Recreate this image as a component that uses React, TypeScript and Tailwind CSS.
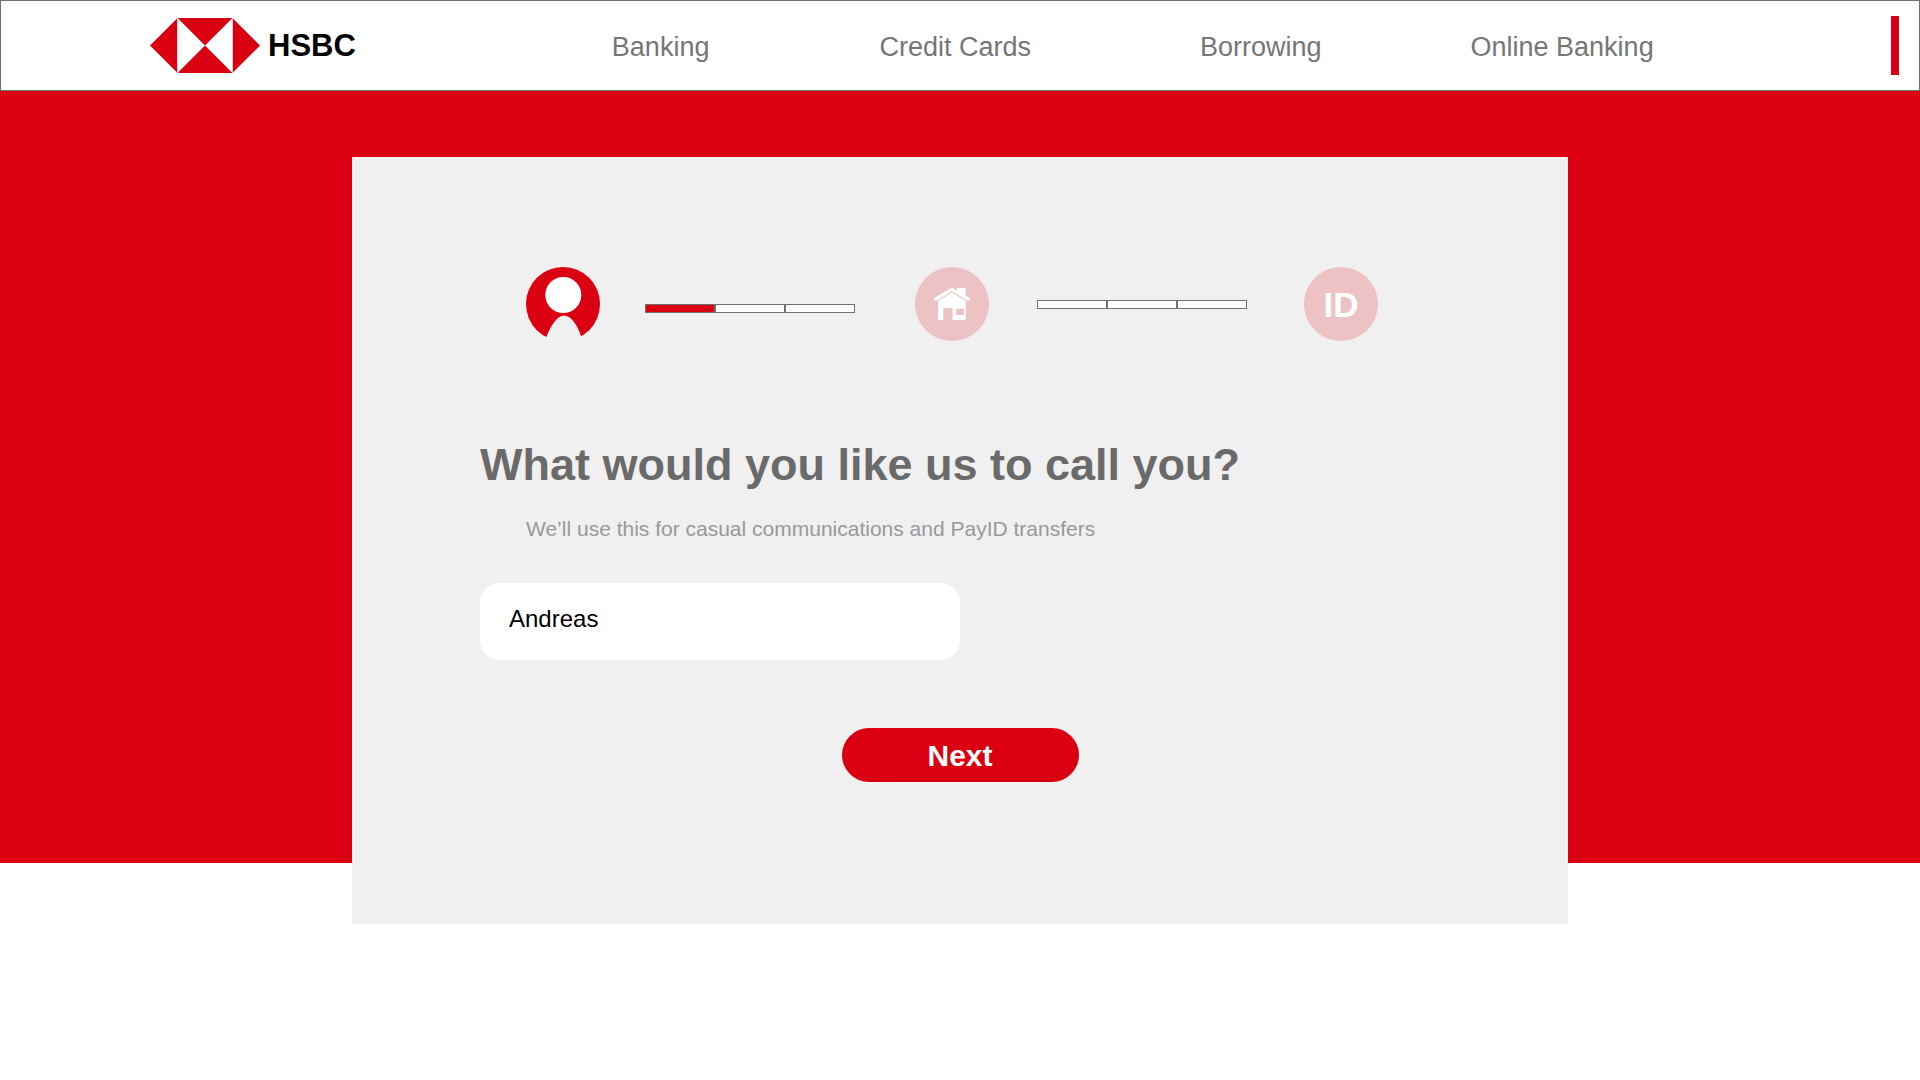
import { useState } from "react";

const LINKS = [
  { label: "Banking", gap: "" },
  { label: "Credit Cards", gap: "ml-[170px]" },
  { label: "Borrowing", gap: "ml-[169px]" },
  { label: "Online Banking", gap: "ml-[149px]" },
];

function Logo() {
  return (
    <a href="#" className="flex items-center gap-2 text-black">
      <svg width="110" height="55" viewBox="0 0 110 55" aria-hidden="true">
        <rect x="27.5" width="55" height="55" fill="#fff" />
        <path
          d="M27.5 0H82.5L55 27.5ZM27.5 55H82.5L55 27.5ZM27.1 0.5V54.5L0 27.5ZM82.9 0.5V54.5L110 27.5Z"
          fill="#db0011"
        />
        <path d="M27.7 0V55M82.5 0V55" stroke="#f8ccd0" strokeWidth="1" />
      </svg>
      <span className="text-[31px] leading-9 font-bold">HSBC</span>
    </a>
  );
}

function Header() {
  return (
    <header className="flex h-[91px] items-center border border-[#707070] bg-white pr-5 pl-[149px]">
      <Logo />
      <nav className="ml-64 flex items-center pt-0.5 text-[27px] leading-8 whitespace-nowrap text-[#767676]">
        {LINKS.map((link) => (
          <a key={link.label} href="#" className={link.gap}>
            {link.label}
          </a>
        ))}
      </nav>
      <span className="ml-auto h-[59px] w-2 bg-[#db0011]" />
    </header>
  );
}

function Segments({ filled, className }: { filled: number; className: string }) {
  return (
    <div className={`grid h-[9px] w-[210px] grid-cols-3 ${className}`}>
      {[0, 1, 2].map((i) => (
        <span
          key={i}
          className={`border border-[#707070] ${i < filled ? "bg-[#db0011]" : "bg-white"}`}
        />
      ))}
    </div>
  );
}

function PersonIcon() {
  return (
    <svg width="74" height="74" viewBox="0 0 74 74" role="img" aria-label="Your details">
      <circle cx="37" cy="37" r="37" fill="#db0011" />
      <circle cx="37.3" cy="28" r="18" fill="#fff" />
      <path d="M18.5 75L20.3 70C25 58 31.5 48.5 38 48.5C44.5 48.5 51 57 55 69L57 75Z" fill="#f0f0f0" />
    </svg>
  );
}

function HouseIcon() {
  return (
    <svg width="74" height="74" viewBox="0 0 74 74" role="img" aria-label="Your address">
      <circle cx="37" cy="37" r="37" fill="#ecc2c4" />
      <path
        d="M23 34L37 25.5L50.8 34V53H37.5V41H28.2V53H23ZM41.2 41.8V48H49V41.8Z"
        fill="#fff"
        fillRule="evenodd"
      />
      <path d="M42 21H50.5V30L42 24.5Z" fill="#fff" />
      <path
        d="M20.5 32.3L37 22.4L53.5 32.3"
        fill="none"
        stroke="#fff"
        strokeWidth="3.4"
        strokeLinecap="round"
        strokeLinejoin="round"
      />
    </svg>
  );
}

export default function App() {
  const [name, setName] = useState("Andreas");

  return (
    <div className="min-h-screen bg-white font-['Liberation_Sans',Arial,sans-serif]">
      <Header />
      <main className="flex justify-center bg-[#db0011] pt-[66px]">
        <form
          className="mb-[-61px] flex w-full max-w-[1216px] flex-col bg-[#f0f0f0] px-32 pt-[110px] pb-[142px]"
          onSubmit={(e) => e.preventDefault()}
        >
          <div className="flex items-start pl-[46px]">
            <PersonIcon />
            <Segments filled={1} className="mt-[37px] ml-[45px]" />
            <div className="ml-[60px]">
              <HouseIcon />
            </div>
            <Segments filled={0} className="mt-[33px] ml-12" />
            <div className="ml-[57px] flex size-[74px] items-center justify-center rounded-full bg-[#ecc2c4] pt-0.5 text-[35px] leading-10 font-bold text-white">
              ID
            </div>
          </div>

          <label
            htmlFor="preferred-name"
            className="mt-[98px] text-[45px] leading-[52px] font-bold text-[#6a6a6a]"
          >
            What would you like us to call you?
          </label>
          <p className="mt-[26px] pl-[46px] text-[21px] leading-6 text-[#999999]">
            We’ll use this for casual communications and PayID transfers
          </p>
          <input
            id="preferred-name"
            type="text"
            value={name}
            onChange={(e) => setName(e.target.value)}
            className="mt-[42px] h-[77px] w-[480px] rounded-[20px] bg-white px-[29px] pb-[5px] text-2xl text-black outline-none"
          />
          <button
            type="submit"
            className="mt-[68px] h-[54px] w-[237px] self-center rounded-full bg-[#db0011] pt-0.5 text-[30px] leading-9 font-bold text-white"
          >
            Next
          </button>
        </form>
      </main>
    </div>
  );
}
